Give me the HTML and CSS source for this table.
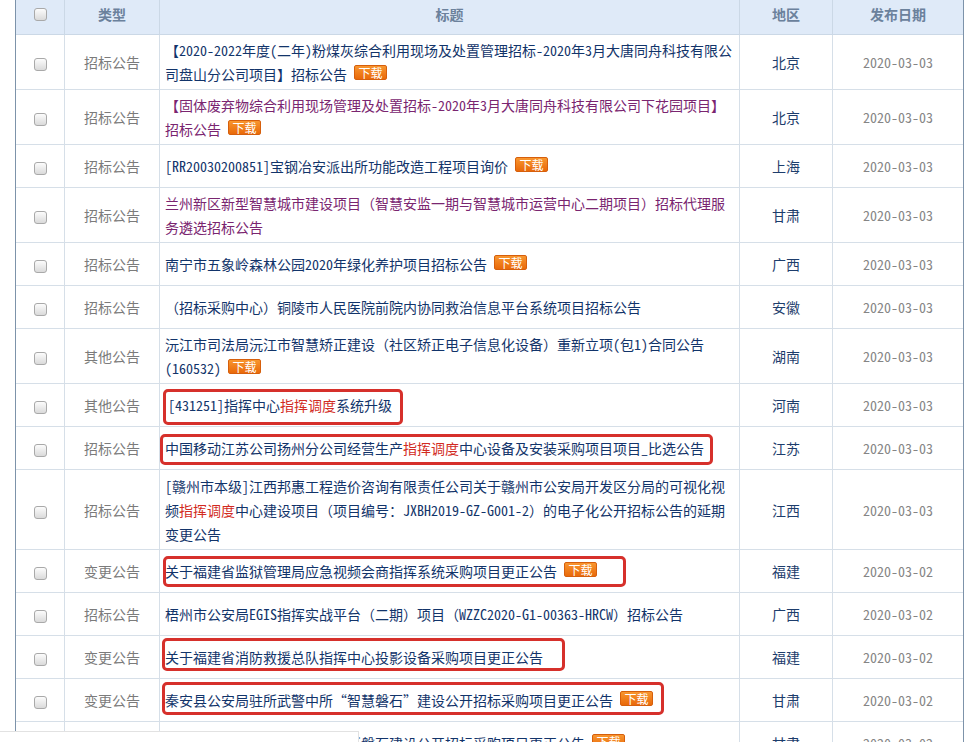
FILE: index.html
```html
<!DOCTYPE html>
<html lang="zh-CN">
<head>
<meta charset="utf-8">
<title>公告列表</title>
<link rel="stylesheet" href="styles.css">
</head>
<body>
<table class="list">
  <colgroup>
    <col class="c-chk"><col class="c-type"><col class="c-title"><col class="c-area"><col class="c-date">
  </colgroup>
  <thead>
    <tr><th><span class="cb"></span></th><th>类型</th><th>标题</th><th>地区</th><th>发布日期</th></tr>
  </thead>
  <tbody>
    <tr><td class="chk"><span class="cb"></span></td><td class="type">招标公告</td><td class="title">【2020-2022年度(二年)粉煤灰综合利用现场及处置管理招标-2020年3月大唐同舟科技有限公司盘山分公司项目】招标公告<span class="dl">下载</span></td><td class="area">北京</td><td class="date">2020-03-03</td></tr>
    <tr><td class="chk"><span class="cb"></span></td><td class="type">招标公告</td><td class="title visited">【固体废弃物综合利用现场管理及处置招标-2020年3月大唐同舟科技有限公司下花园项目】招标公告<span class="dl">下载</span></td><td class="area">北京</td><td class="date">2020-03-03</td></tr>
    <tr><td class="chk"><span class="cb"></span></td><td class="type">招标公告</td><td class="title">[RR20030200851]宝钢冶安派出所功能改造工程项目询价<span class="dl">下载</span></td><td class="area">上海</td><td class="date">2020-03-03</td></tr>
    <tr><td class="chk"><span class="cb"></span></td><td class="type">招标公告</td><td class="title visited">兰州新区新型智慧城市建设项目<span class="fw">（</span>智慧安监一期与智慧城市运营中心二期项目<span class="fw">）</span>招标代理服务遴选招标公告</td><td class="area">甘肃</td><td class="date">2020-03-03</td></tr>
    <tr><td class="chk"><span class="cb"></span></td><td class="type">招标公告</td><td class="title">南宁市五象岭森林公园2020年绿化养护项目招标公告<span class="dl">下载</span></td><td class="area">广西</td><td class="date">2020-03-03</td></tr>
    <tr><td class="chk"><span class="cb"></span></td><td class="type">招标公告</td><td class="title"><span class="fw">（</span>招标采购中心<span class="fw">）</span>铜陵市人民医院前院内协同救治信息平台系统项目招标公告</td><td class="area">安徽</td><td class="date">2020-03-03</td></tr>
    <tr><td class="chk"><span class="cb"></span></td><td class="type">其他公告</td><td class="title">沅江市司法局沅江市智慧矫正建设<span class="fw">（</span>社区矫正电子信息化设备<span class="fw">）</span>重新立项(包1)合同公告(160532)<span class="dl">下载</span></td><td class="area">湖南</td><td class="date">2020-03-03</td></tr>
    <tr><td class="chk"><span class="cb"></span></td><td class="type">其他公告</td><td class="title"><span class="ind">[431251]指挥中心<em class="hl">指挥调度</em>系统升级</span><span class="mark m8"></span></td><td class="area">河南</td><td class="date">2020-03-03</td></tr>
    <tr><td class="chk"><span class="cb"></span></td><td class="type">招标公告</td><td class="title">中国移动江苏公司扬州分公司经营生产<em class="hl">指挥调度</em>中心设备及安装采购项目项目_比选公告<span class="mark m9"></span></td><td class="area">江苏</td><td class="date">2020-03-03</td></tr>
    <tr class="tall"><td class="chk"><span class="cb"></span></td><td class="type">招标公告</td><td class="title">[赣州市本级]江西邦惠工程造价咨询有限责任公司关于赣州市公安局开发区分局的可视化视频<em class="hl">指挥调度</em>中心建设项目<span class="fw">（</span>项目编号<span class="fw">：</span>JXBH2019-GZ-G001-2<span class="fw">）</span>的电子化公开招标公告的延期变更公告</td><td class="area">江西</td><td class="date">2020-03-03</td></tr>
    <tr><td class="chk"><span class="cb"></span></td><td class="type">变更公告</td><td class="title">关于福建省监狱管理局应急视频会商指挥系统采购项目更正公告<span class="dl">下载</span><span class="mark m11"></span></td><td class="area">福建</td><td class="date">2020-03-02</td></tr>
    <tr><td class="chk"><span class="cb"></span></td><td class="type">招标公告</td><td class="title">梧州市公安局EGIS指挥实战平台<span class="fw">（</span>二期<span class="fw">）</span>项目<span class="fw">（</span>WZZC2020-G1-00363-HRCW<span class="fw">）</span>招标公告</td><td class="area">广西</td><td class="date">2020-03-02</td></tr>
    <tr><td class="chk"><span class="cb"></span></td><td class="type">变更公告</td><td class="title">关于福建省消防救援总队指挥中心投影设备采购项目更正公告<span class="mark m13"></span></td><td class="area">福建</td><td class="date">2020-03-02</td></tr>
    <tr><td class="chk"><span class="cb"></span></td><td class="type">变更公告</td><td class="title">秦安县公安局驻所武警中所<span class="fw">“</span>智慧磐石<span class="fw">”</span>建设公开招标采购项目更正公告<span class="dl">下载</span><span class="mark m14"></span></td><td class="area">甘肃</td><td class="date">2020-03-02</td></tr>
    <tr><td class="chk"><span class="cb"></span></td><td class="type">变更公告</td><td class="title">关于秦安县公安局驻所武警中所磐石建设公开招标采购项目更正公告<span class="dl">下载</span></td><td class="area">甘肃</td><td class="date">2020-03-02</td></tr>
  </tbody>
</table>
<div class="popup"></div>
</body>
</html>
```

FILE: styles.css
```css
html, body {
  margin: 0;
  padding: 0;
  background: #fff;
}

body {
  font-family: "Noto Sans CJK SC", "Noto Sans", sans-serif;
  font-size: 14px;
  font-feature-settings: "hwid" 1;
  text-spacing-trim: space-all;
  color: #163a6e;
}

.fw {
  font-feature-settings: normal;
}

.list {
  margin-left: 15px;
  width: 949px;
  table-layout: fixed;
  border-collapse: separate;
  border-spacing: 0;
  border-left: 1px solid #7d93aa;
  border-right: 1px solid #7d93aa;
}

.c-chk { width: 49px; }
.c-type { width: 95px; }
.c-title { width: 580px; }
.c-area { width: 93px; }
.c-date { width: 130px; }

.list th {
  height: 34px;
  padding: 0;
  line-height: 28px;
  vertical-align: top;
  background: #dfeaf8;
  color: #6b819c;
  font-weight: bold;
  text-align: center;
  border-right: 1px solid #cbd8e6;
  border-bottom: 1px solid #cbd8e6;
}

.list td {
  height: 36px;
  padding: 3px 5px;
  line-height: 24px;
  vertical-align: middle;
  border-right: 1px solid #d6dfe8;
  border-bottom: 1px solid #d6dfe8;
}

.list tr.tall td {
  padding-top: 4px;
  padding-bottom: 3px;
}

.list th:last-child,
.list td:last-child {
  border-right: 0;
}

.list td.chk {
  padding: 0;
  text-align: center;
}

.list th .cb {
  margin-top: 8px;
  vertical-align: top;
}

.cb {
  display: inline-block;
  box-sizing: border-box;
  width: 13px;
  height: 13px;
  border: 1px solid #a9a9a9;
  border-radius: 3px;
  background: linear-gradient(#fcfcfc, #dadada);
  vertical-align: middle;
}

.type {
  text-align: center;
  color: #7b7b7b;
}

.title {
  position: relative;
  color: #12346a;
}

.title.visited {
  color: #7a2570;
}

.hl {
  font-style: normal;
  color: #d22a22;
}

.ind {
  padding-left: 3px;
}

.area {
  text-align: center;
  color: #1d3d6c;
}

.date {
  text-align: center;
  color: #858585;
}

.dl {
  display: inline-block;
  box-sizing: border-box;
  width: 33px;
  height: 15px;
  margin-left: 7px;
  margin-top: 3px;
  border: 1px solid #d65f0c;
  border-radius: 2px;
  background: linear-gradient(#f8962f, #e9690a);
  color: #fff;
  font-size: 12px;
  line-height: 13px;
  text-align: center;
  vertical-align: top;
}

.mark {
  position: absolute;
  box-sizing: border-box;
  border: 3px solid #d6302b;
  border-radius: 5px;
  pointer-events: none;
}

.m8 { left: 3px; top: 5px; width: 240px; height: 36px; }
.m9 { left: 0; top: 7px; width: 553px; height: 31px; }
.m11 { left: 3px; top: 6px; width: 463px; height: 31px; }
.m13 { left: 2px; top: 2px; width: 403px; height: 33px; }
.m14 { left: 2px; top: 3px; width: 502px; height: 33px; }

.popup {
  position: absolute;
  left: 0;
  top: 731px;
  width: 358px;
  height: 40px;
  background: #fff;
  border-top: 1px solid #e2e2e2;
  border-right: 1px solid #e2e2e2;
}
```
